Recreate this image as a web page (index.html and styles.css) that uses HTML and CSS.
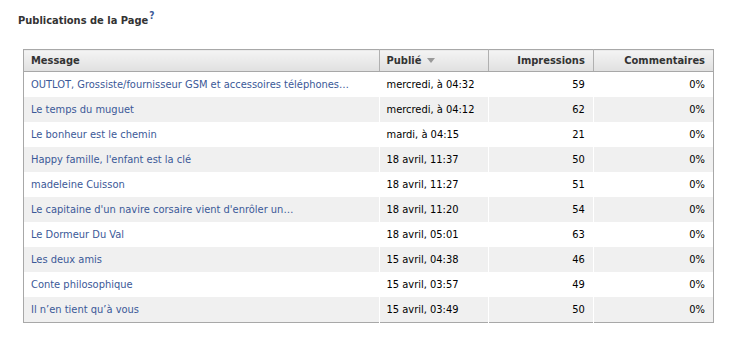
FILE: index.html
```html
<!DOCTYPE html>
<html lang="fr">
<head>
<meta charset="utf-8">
<title>Publications de la Page</title>
<link rel="stylesheet" href="styles.css">
</head>
<body>
<div class="wrap">
  <h2 class="title">Publications de la Page<a class="help" href="#">?</a></h2>
  <table class="posts">
    <colgroup>
      <col class="w-msg"><col class="w-pub"><col class="w-imp"><col class="w-com">
    </colgroup>
    <thead>
      <tr>
        <th class="c-msg">Message</th>
        <th class="c-pub">Publié <span class="arrow"></span></th>
        <th class="c-imp">Impressions</th>
        <th class="c-com">Commentaires</th>
      </tr>
    </thead>
    <tbody>
      <tr><td class="c-msg"><a href="#">OUTLOT, Grossiste/fournisseur GSM et accessoires téléphones…</a></td><td class="c-pub">mercredi, à 04:32</td><td class="c-imp">59</td><td class="c-com">0%</td></tr>
      <tr><td class="c-msg"><a href="#">Le temps du muguet</a></td><td class="c-pub">mercredi, à 04:12</td><td class="c-imp">62</td><td class="c-com">0%</td></tr>
      <tr><td class="c-msg"><a href="#">Le bonheur est le chemin</a></td><td class="c-pub">mardi, à 04:15</td><td class="c-imp">21</td><td class="c-com">0%</td></tr>
      <tr><td class="c-msg"><a href="#">Happy famille, l'enfant est la clé</a></td><td class="c-pub">18 avril, 11:37</td><td class="c-imp">50</td><td class="c-com">0%</td></tr>
      <tr><td class="c-msg"><a href="#">madeleine Cuisson</a></td><td class="c-pub">18 avril, 11:27</td><td class="c-imp">51</td><td class="c-com">0%</td></tr>
      <tr><td class="c-msg"><a href="#">Le capitaine d'un navire corsaire vient d'enrôler un…</a></td><td class="c-pub">18 avril, 11:20</td><td class="c-imp">54</td><td class="c-com">0%</td></tr>
      <tr><td class="c-msg"><a href="#">Le Dormeur Du Val</a></td><td class="c-pub">18 avril, 05:01</td><td class="c-imp">63</td><td class="c-com">0%</td></tr>
      <tr><td class="c-msg"><a href="#">Les deux amis</a></td><td class="c-pub">15 avril, 04:38</td><td class="c-imp">46</td><td class="c-com">0%</td></tr>
      <tr><td class="c-msg"><a href="#">Conte philosophique</a></td><td class="c-pub">15 avril, 03:57</td><td class="c-imp">49</td><td class="c-com">0%</td></tr>
      <tr><td class="c-msg"><a href="#">Il n’en tient qu’à vous</a></td><td class="c-pub">15 avril, 03:49</td><td class="c-imp">50</td><td class="c-com">0%</td></tr>
    </tbody>
  </table>
</div>
</body>
</html>
```
FILE: styles.css
```css
html, body {
  margin: 0;
  padding: 0;
  background: #fff;
}
body {
  font-family: "DejaVu Sans Condensed", "DejaVu Sans", Verdana, sans-serif;
  font-size: 11px;
  color: #000;
}
.wrap {
  padding: 9px 18px 0 18px;
}
.title {
  margin: 0;
  font-size: 11px;
  font-weight: bold;
  color: #333;
  line-height: 14px;
}
.help {
  color: #3b5998;
  text-decoration: none;
  font-size: 10px;
  vertical-align: 5px;
  margin-left: 1px;
}
.posts {
  margin: 21px 0 0 5px;
  width: 691px;
  table-layout: fixed;
  border-collapse: collapse;
  border: 1px solid #a8a8a8;
}
.w-msg { width: 355px; }
.w-pub { width: 109px; }
.w-imp { width: 105px; }
.w-com { width: 120px; }
.posts th {
  height: 21px;
  padding: 0 7px;
  background: linear-gradient(#f4f4f4, #e0e0e0);
  border-bottom: 1px solid #a8a8a8;
  border-left: 1px solid #b0b0b0;
  font-weight: bold;
  color: #333;
  text-align: left;
  white-space: nowrap;
}
.posts th:first-child { border-left: none; }
.posts td {
  height: 25px;
  padding: 0 7px;
  border-left: 1px solid #fff;
  white-space: nowrap;
  overflow: hidden;
}
.posts td:first-child { border-left: none; }
.posts tbody tr:nth-child(even) td { background: #f0f0f0; }
.posts a {
  color: #3b5998;
  text-decoration: none;
}
.posts .c-imp, .posts .c-com {
  text-align: right;
  padding-right: 8px;
}
.arrow {
  display: inline-block;
  width: 0;
  height: 0;
  border-left: 4px solid transparent;
  border-right: 4px solid transparent;
  border-top: 5px solid #999;
  vertical-align: 1px;
  margin-left: 2px;
}
```
